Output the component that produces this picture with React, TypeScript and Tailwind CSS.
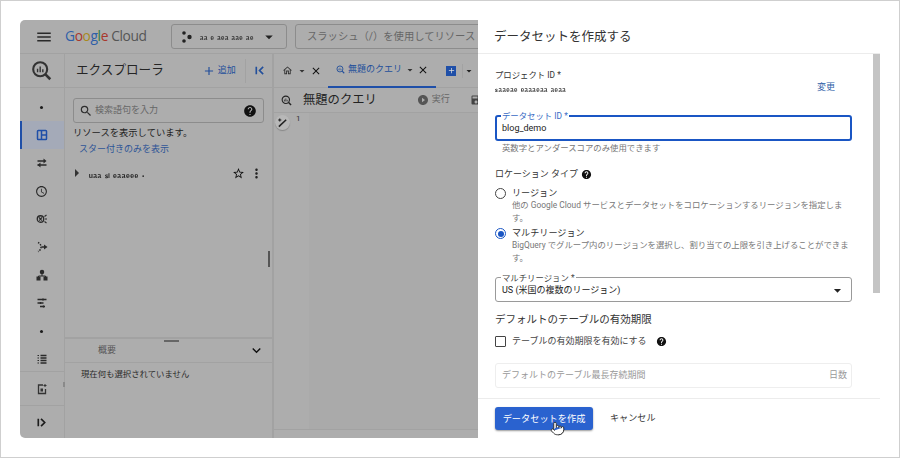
import React from "react";
import {
  MdMenu, MdSearch, MdHelp, MdStarBorder, MdMoreVert, MdAdd, MdExpandMore, MdArrowDropDown, MdClose,
  MdAccessTime, MdPlayCircleFilled, MdOutlineHome, MdSave,
} from "react-icons/md";
import { Pointer } from "lucide-react";

const font = { fontFamily: 'Roboto, "Noto Sans CJK JP", sans-serif' };

function BqSearch({ size = 24, color = "#333" }: { size?: number; color?: string }) {
  return (
    <svg width={size} height={size} viewBox="0 0 24 24" fill="none" className="shrink-0">
      <circle cx="10.5" cy="10.5" r="8" stroke={color} strokeWidth="2.4" />
      <path d="M16.5 16.5L22 22" stroke={color} strokeWidth="3" />
      <path d="M7.5 10v4M10.5 7.5V14M13.5 10.5V14" stroke={color} strokeWidth="1.6" />
    </svg>
  );
}

function Edge({ dir, color }: { dir: "left" | "right"; color: string }) {
  return (
    <svg width="11" height="11" viewBox="0 0 24 24" fill="none" stroke={color} strokeWidth="3.6" className="shrink-0">
      <path d="M5 4v16" />
      <path d={dir === "left" ? "M20 4l-8 8 8 8" : "M11 4l8 8-8 8"} />
    </svg>
  );
}

function RailIcon({ kind }: { kind: string }) {
  const c = "#2a2a2a";
  const common = { width: 12, height: 12, viewBox: "0 0 24 24", fill: "none", stroke: c, strokeWidth: 3 };
  if (kind === "dot") return <div className="w-[3px] h-[3px] rounded-full bg-[#1c1c1c]" />;
  if (kind === "table")
    return (
      <svg {...common} stroke="#1f4fa8">
        <rect x="3" y="3" width="18" height="18" rx="1.5" />
        <path d="M11 3v18M11 12h10" />
      </svg>
    );
  if (kind === "swap")
    return (
      <svg {...common} strokeWidth={2.6}>
        <path d="M3 8h15M3 16h18" />
        <path d="M15 3l6 5-6 5z" fill={c} stroke="none" />
        <path d="M9 11l-6 5 6 5z" fill={c} stroke="none" />
      </svg>
    );
  if (kind === "clock") return <MdAccessTime size={13} color={c} />;
  if (kind === "schedule")
    return (
      <svg {...common} strokeWidth={2.6}>
        <circle cx="9" cy="12" r="6.5" />
        <path d="M6 9l6 6M12 9l-6 6M17 7l4-3M18 12h4M17 17l4 3" strokeWidth="2.2" />
      </svg>
    );
  if (kind === "flow")
    return (
      <svg {...common} strokeWidth={3}>
        <path d="M4 3a9.5 9.5 0 0 1 6 9 9.5 9.5 0 0 1-6 9" strokeDasharray="3 2.4" />
        <path d="M11 12h7" />
        <path d="M16 7l7 5-7 5z" fill={c} stroke="none" />
      </svg>
    );
  if (kind === "tree")
    return (
      <svg width={12} height={12} viewBox="0 0 24 24" fill={c}>
        <circle cx="12" cy="6" r="4.5" />
        <rect x="1" y="15" width="8" height="8" />
        <rect x="15" y="15" width="8" height="8" />
        <path d="M5 17v-3h14v3M12 8v6" stroke={c} strokeWidth="2" fill="none" />
      </svg>
    );
  if (kind === "tune")
    return (
      <svg {...common} strokeWidth={2.6}>
        <path d="M3 5h18M3 12h12M8 19h10" />
        <path d="M14 3v4M9 10v4M15 17v4" />
      </svg>
    );
  if (kind === "list")
    return (
      <svg {...common}>
        <path d="M9 5h12M9 10h12M9 15h12M9 20h12" />
        <path d="M3 5h3M3 10h3M3 15h3M3 20h3" strokeWidth="2.4" />
      </svg>
    );
  return (
    <svg {...common} stroke="#333" strokeWidth={2.6}>
      <path d="M14 4H5v17h14v-9" />
      <path d="M9 11h5v6H9z" fill="#333" stroke="none" />
      <path d="M18 2v6M15 5h6" strokeWidth="2" />
    </svg>
  );
}

function Redacted({ text, className }: { text: string; className?: string }) {
  return <span className={"blur-[0.4px] font-bold tracking-[0.5px] " + (className ?? "")}>{text}</span>;
}

function Rail() {
  const items = ["dot", "table", "swap", "clock", "schedule", "flow", "tree", "tune", "dot", "list"];
  return (
    <div className="w-[45px] shrink-0 border-r border-[#a2a2a2] flex flex-col relative">
      <div className="h-[34px] shrink-0 flex items-center justify-center border-b border-[#a2a2a2] pr-[2px]">
        <BqSearch size={21} color="#333" />
      </div>
      <div className="pt-[5px] flex flex-col">
        {items.map((k, i) => (
          <div
            key={i}
            className={
              "h-[28px] flex items-center justify-center " +
              (k === "table" ? "bg-[#a4aab8] border-l-2 border-[#1f4fa8] pr-[2px]" : "pr-[1px]")
            }
          >
            <RailIcon kind={k} />
          </div>
        ))}
      </div>
      <div className="mt-[-2px] h-[34px] border-t border-[#a2a2a2] flex items-center justify-center pr-[1px]">
        <RailIcon kind="doc" />
      </div>
      <div className="flex-1 border-t border-[#a2a2a2] flex items-center justify-center pr-[1px]">
        <Edge dir="right" color="#1c1c1c" />
      </div>
      <div className="absolute right-[-1px] top-[328px] w-[2px] h-[5px] bg-[#8a8a8a]" />
    </div>
  );
}

function Explorer() {
  return (
    <div className="w-[209px] shrink-0 border-r-2 border-[#a2a2a2] flex flex-col">
      <div className="h-[34px] shrink-0 border-b border-[#a2a2a2] flex items-center pl-[11px]">
        <span className="text-[12.6px] text-[#252525]">エクスプローラ</span>
        <span className="ml-[38px] flex items-center text-[#234f9b] text-[9px]">
          <MdAdd size={14} className="shrink-0" />
          <span className="ml-[2px]">追加</span>
        </span>
        <span className="w-px h-[24px] bg-[#a2a2a2] ml-[9px]" />
        <span className="ml-[8px]">
          <Edge dir="left" color="#234f9b" />
        </span>
      </div>
      <div className="h-[249px] shrink-0 px-[8px] pt-[10px] relative">
        <div className="h-[25px] w-[191px] border border-[#8c8c8c] rounded-[3px] flex items-center pl-[5px] pr-[6px]">
          <MdSearch size={14} color="#2e2e2e" className="shrink-0" />
          <span className="ml-[2px] text-[9px] text-[#666]">検索語句を入力</span>
          <MdHelp size={14} color="#111" className="ml-auto shrink-0" />
        </div>
        <div className="mt-[3px] text-[9.3px] leading-[14px] text-[#222]">リソースを表示しています。</div>
        <div className="pl-[6px] mt-[2px] text-[9px] leading-[15px] text-[#2f5597]">スター付きのみを表示</div>
        <div className="mt-[8px] flex items-center h-[16px]">
          <span className="w-0 h-0 border-y-[4px] border-y-transparent border-l-[4px] border-l-[#333] ml-[2px]" />
          <Redacted text="ᵤₐₐ ₛᵢ ₑₐₐₑₑₑ ." className="ml-[10px] text-[10px] text-[#222]" />
          <MdStarBorder size={13} color="#111" className="ml-auto shrink-0" />
          <MdMoreVert size={15} color="#222" className="ml-[4px] shrink-0" />
        </div>
        <div className="absolute right-[2px] top-[163px] w-[2px] h-[16px] bg-[#555]" />
      </div>
      <div className="h-[26px] shrink-0 border-t-2 border-b border-[#a2a2a2] relative flex items-center pl-[33px] pr-[7px]">
        <div className="absolute left-[99px] top-[1px] w-[15px] h-[2px] bg-[#666]" />
        <span className="text-[9px] text-[#555]">概要</span>
        <MdExpandMore size={17} color="#111" className="ml-auto shrink-0" />
      </div>
      <div className="pl-[16px] pt-[5px] text-[8.4px] text-[#2a2a2a]">現在何も選択されていません</div>
    </div>
  );
}

function Main() {
  return (
    <div className="flex-1 min-w-0 flex flex-col overflow-hidden">
      <div className="h-[34px] shrink-0 border-b border-[#a2a2a2] flex items-center pl-[8px] text-[#222]">
        <MdOutlineHome size={11} color="#333" className="shrink-0" />
        <MdArrowDropDown size={12} color="#333" className="ml-[3px] shrink-0" />
        <MdClose size={12} color="#111" className="ml-[2px] shrink-0" />
        <div className="h-[34px] w-[108px] ml-[6px] border-b-2 border-[#1f4fa8] flex items-center pl-[8px] shrink-0">
          <BqSearch size={9} color="#234f9b" />
          <span className="ml-[3px] text-[9px] text-[#234f9b] whitespace-nowrap">無題のクエリ</span>
          <MdArrowDropDown size={12} color="#333" className="ml-[2px] shrink-0" />
          <MdClose size={12} color="#111" className="ml-[1px] shrink-0" />
        </div>
        <span className="ml-[10px] w-[10px] h-[10px] bg-[#1f4fa8] shrink-0 flex items-center justify-center">
          <MdAdd size={9} color="#ddd" />
        </span>
        <span className="w-px h-[14px] bg-[#a2a2a2] ml-[6px] shrink-0" />
        <MdArrowDropDown size={12} color="#222" className="ml-0 shrink-0" />
      </div>
      <div className="h-[25px] shrink-0 border-b border-[#a2a2a2] flex items-center pl-[7px]">
        <BqSearch size={11} color="#222" />
        <span className="ml-[11px] text-[12.3px] text-[#222] whitespace-nowrap">無題のクエリ</span>
        <MdPlayCircleFilled size={12} color="#555" className="ml-[40px] shrink-0" />
        <span className="ml-[3px] text-[9px] text-[#666] whitespace-nowrap">実行</span>
        <MdSave size={12} color="#444" className="ml-[20px] shrink-0" />
      </div>
      <div className="h-[316px] shrink-0 flex">
        <div className="w-[35px] shrink-0 relative">
          <div className="absolute left-[1px] top-[2px] w-[15px] h-[15px] rounded-full bg-[#b8b8b8] shadow-[0_1px_1px_#888] flex items-center justify-center">
            <svg width="11" height="11" viewBox="0 0 24 24" fill="none" stroke="#222" strokeWidth="3.4">
              <path d="M4 21L20 6" />
              <path d="M6 3v7M2.5 6.5h7" strokeWidth="2.4" />
            </svg>
          </div>
          <span className="absolute left-[22px] top-[0px] text-[8px] text-[#333]">1</span>
        </div>
        <div className="flex-1 bg-[#aaaaaa]" />
      </div>
      <div className="flex-1 border-t border-[#a2a2a2]" />
    </div>
  );
}

function Drawer() {
  return (
    <div className="w-[402px] shrink-0 bg-white flex flex-col text-[#2b2b2b] rounded-r-[4px]">
      <div className="h-[34px] shrink-0 border-b border-[#ececec] flex items-center pl-[16px] pt-[1px] text-[12.5px] text-[#333]">
        データセットを作成する
      </div>
      <div className="h-[344px] shrink-0 flex overflow-hidden">
        <div className="flex-1 min-w-0 pl-[17px] pr-[21px]">
          <div className="pt-[15px] text-[8.4px] leading-[12px] text-[#333]">プロジェクト ID *</div>
          <div className="flex items-start h-[34px]">
            <Redacted text="ₛₐₐₑₐₑ ₑₐₐₐₑₐₐ ₐₑₐₐ" className="text-[9px] leading-[14px] text-[#444]" />
            <span className="ml-auto mr-[17px] text-[9px] leading-[12px] text-[#2f5fa8]">変更</span>
          </div>
          <div className="relative h-[26px] border-2 border-[#1a56c4] rounded-[3px] flex items-center pl-[5px] pt-[2px] text-[9px] text-[#222]">
            <span className="absolute left-[4px] -top-[6px] bg-white px-[1px] text-[8.4px] leading-[10px] text-[#3a6bc4]">データセット ID *</span>
            blog_demo
          </div>
          <div className="pl-[7px] text-[8.4px] leading-[14px] text-[#777]">英数字とアンダースコアのみ使用できます</div>
          <div className="mt-[12px] flex items-center text-[9px] leading-[14px] text-[#333]">
            ロケーション タイプ
            <MdHelp size={11} color="#111" className="ml-[3px] shrink-0" />
          </div>
          <div className="mt-[6px] flex">
            <span className="w-[11px] h-[11px] mt-[1px] rounded-full border-[1.5px] border-[#444] shrink-0" />
            <div className="ml-[6px] min-w-0">
              <div className="text-[9.1px] leading-[12px] text-[#333]">リージョン</div>
              <div className="text-[8.4px] leading-[12.5px] text-[#777]">他の Google Cloud サービスとデータセットをコロケーションするリージョンを指定します。</div>
            </div>
          </div>
          <div className="mt-[3px] flex">
            <span className="w-[11px] h-[11px] mt-[1px] rounded-full border-[1.5px] border-[#1a56c4] shrink-0 flex items-center justify-center">
              <span className="w-[6px] h-[6px] rounded-full bg-[#1a56c4]" />
            </span>
            <div className="ml-[6px] min-w-0">
              <div className="text-[9.1px] leading-[12px] text-[#333]">マルチリージョン</div>
              <div className="text-[8.4px] leading-[12.5px] text-[#777]">BigQuery でグループ内のリージョンを選択し、割り当ての上限を引き上げることができます。</div>
            </div>
          </div>
          <div className="mt-[13px] relative h-[25px] border border-[#9a9a9a] rounded-[3px] flex items-center pl-[6px] pt-[2px] text-[9px] text-[#222]">
            <span className="absolute left-[5px] -top-[5px] bg-white px-[1px] text-[8.4px] leading-[10px] text-[#444]">マルチリージョン *</span>
            US (米国の複数のリージョン)
            <MdArrowDropDown size={17} color="#222" className="ml-auto mr-[5px] shrink-0" />
          </div>
          <div className="mt-[11px] text-[10.5px] leading-[14px] text-[#333]">デフォルトのテーブルの有効期限</div>
          <div className="mt-[7px] flex items-center">
            <span className="w-[11px] h-[11px] border-[1.5px] border-[#444] rounded-[1px] shrink-0" />
            <span className="ml-[6px] text-[9px] leading-[14px] text-[#444]">テーブルの有効期限を有効にする</span>
            <MdHelp size={11} color="#111" className="ml-[9px] shrink-0" />
          </div>
          <div className="mt-[15px] h-[25px] border border-[#eeeeee] rounded-[3px] flex items-center pl-[6px] pr-[4px] text-[9px] text-[#999]">
            デフォルトのテーブル最長存続期間
            <span className="ml-auto">日数</span>
          </div>
        </div>
        <div className="w-[7px] shrink-0">
          <div className="h-[239px] bg-[#c4c4c4]" />
        </div>
      </div>
      <div className="flex-1 border-t border-[#ececec] pl-[17px] pt-[8px] flex items-start">
        <div className="relative w-[98px] h-[23px] rounded-[3px] bg-[#2a62cf] shadow-[0_1px_2px_#999] text-white text-[9.2px] flex items-center justify-center">
          データセットを作成
          <Pointer size={15} fill="#fff" color="#333" strokeWidth={1.6} className="absolute left-[55px] top-[14px]" />
        </div>
        <span className="ml-[17px] h-[23px] flex items-center text-[9.1px] text-[#333]">キャンセル</span>
      </div>
    </div>
  );
}

export default function App() {
  return (
    <div className="w-[900px] h-[458px] bg-white border border-[#cfcfcf] pt-[19px] pl-[19px] pr-[19px] pb-[19px] overflow-hidden" style={font}>
      <div className="flex h-[418px] w-[860px]">
        <div className="w-[458px] shrink-0 bg-[#adadad] rounded-l-[5px] overflow-hidden flex flex-col">
          <div className="h-[34px] shrink-0 border-b border-[#a2a2a2] flex items-center overflow-hidden">
            <MdMenu size={18} color="#2a2a2a" className="ml-[15px] shrink-0" />
            <span className="ml-[12px] w-[81px] shrink-0 text-[13.8px] tracking-[-0.4px] whitespace-nowrap" style={{ fontFamily: '"Open Sans", sans-serif' }}>
              <span className="text-[#2f5fa8]">G</span>
              <span className="text-[#a8372c]">o</span>
              <span className="text-[#a98a1c]">o</span>
              <span className="text-[#2f5fa8]">g</span>
              <span className="text-[#2f7a44]">l</span>
              <span className="text-[#a8372c]">e</span>
              <span className="text-[#555]"> Cloud</span>
            </span>
            <div className="ml-[25px] w-[116px] h-[25px] shrink-0 border border-[#8c8c8c] rounded-[3px] flex items-center pl-[10px] pr-[8px]">
              <svg width="10" height="12" viewBox="0 0 10 12" fill="#222" className="shrink-0">
                <circle cx="2" cy="2" r="1.8" />
                <circle cx="2" cy="10" r="1.8" />
                <circle cx="7.5" cy="6" r="2.2" />
              </svg>
              <Redacted text="ₐₐ ₑ ₐₑₐ ₐₐₑ ₐₑ" className="ml-[8px] text-[9px] text-[#333] whitespace-nowrap" />
              <MdArrowDropDown size={18} color="#222" className="ml-auto shrink-0" />
            </div>
            <div className="ml-[8px] w-[200px] h-[25px] shrink-0 border border-[#8c8c8c] rounded-[3px] flex items-center pl-[11px] text-[10.3px] text-[#666] whitespace-nowrap">
              スラッシュ（/）を使用してリソース
            </div>
          </div>
          <div className="flex-1 flex min-h-0">
            <Rail />
            <Explorer />
            <Main />
          </div>
        </div>
        <Drawer />
      </div>
    </div>
  );
}
